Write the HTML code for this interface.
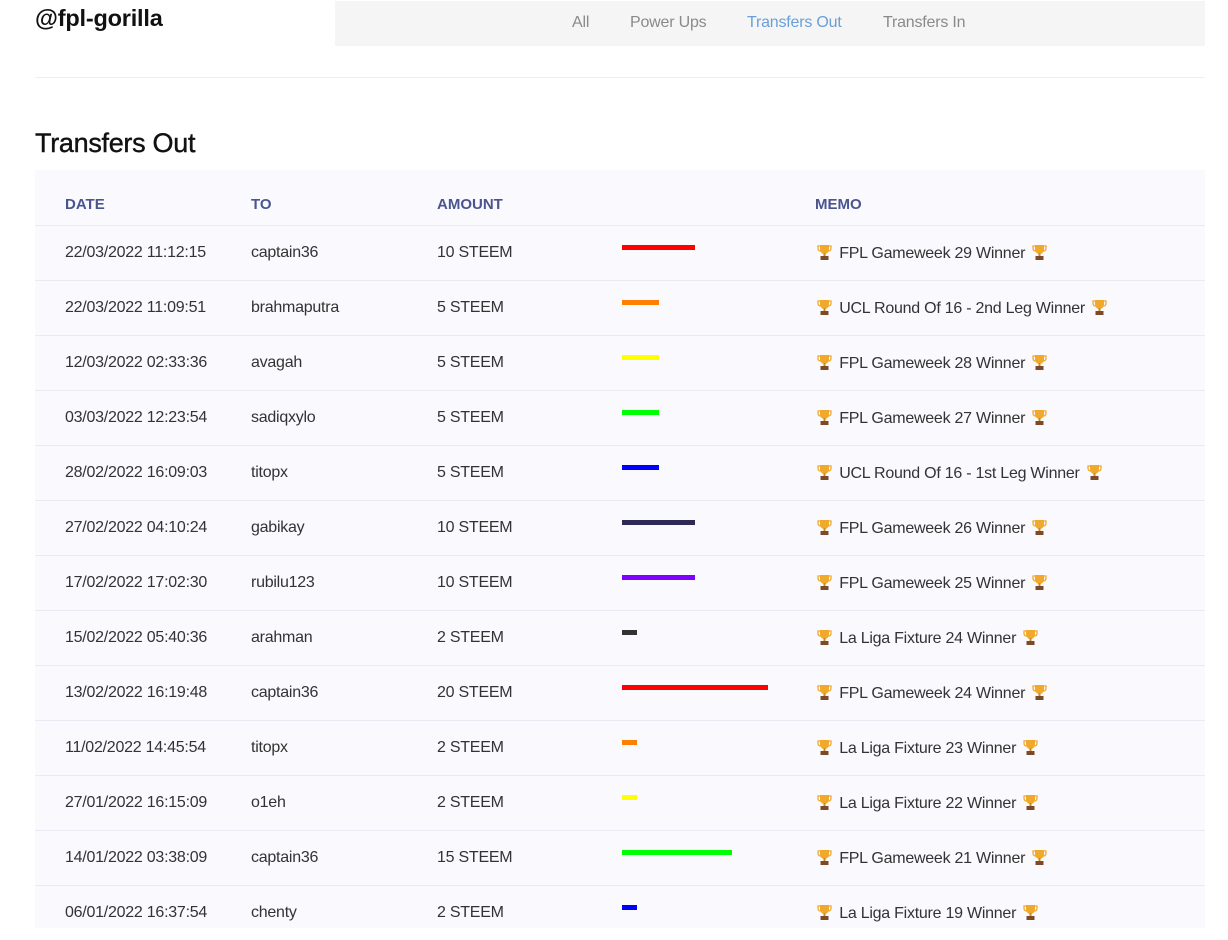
<!DOCTYPE html>
<html><head><meta charset="utf-8"><style>
*{margin:0;padding:0;box-sizing:border-box}
body{width:1228px;height:928px;overflow:hidden;background:#fff;font-family:"Liberation Sans",sans-serif;color:#333;position:relative}
.brand{position:absolute;left:35px;top:5px;font-size:23.5px;font-weight:bold;color:#111;letter-spacing:-0.2px}
.nav{position:absolute;left:335px;top:1px;width:870px;height:45px;background:#f5f5f5}
.nav span{position:absolute;top:13px;font-size:16px;color:#8a8a8a;letter-spacing:-0.2px}
.sep{position:absolute;left:35px;top:77px;width:1170px;height:1px;background:#eee}
h1{position:absolute;left:35px;top:128px;font-size:27px;font-weight:normal;color:#111;letter-spacing:-0.3px;-webkit-text-stroke:0.4px #111}
.tbl{position:absolute;left:35px;top:170px;width:1170px;height:758px;background:#f9f9fe}
.row{position:absolute;left:0;width:1170px;height:55px;border-top:1px solid #e8ebf3}
.row div{position:absolute;top:18px;font-size:16px;color:#333;white-space:nowrap;letter-spacing:-0.25px}
.hd div{position:absolute;top:26px;font-size:15px;font-weight:bold;color:#4a5590}
.bar{position:absolute;left:587px;top:19px;height:5px}
svg{vertical-align:-2px;margin:0 3px}
</style></head><body>
<div class="brand">@fpl-gorilla</div>
<div class="nav"><span style="left:237px">All</span><span style="left:295px">Power Ups</span><span style="left:412px;color:#6a9fd8">Transfers Out</span><span style="left:548px">Transfers In</span></div>
<div class="sep"></div>
<h1>Transfers Out</h1>
<div class="tbl">
<div class="hd"><div style="left:30px">DATE</div><div style="left:216px">TO</div><div style="left:402px">AMOUNT</div><div style="left:780px">MEMO</div></div>
<div id="rows"></div>
</div>
<script>
var t='<svg width="15" height="16" viewBox="0 0 15 16"><path d="M3 1h9v4c0 3-2 5-4.5 5S3 8 3 5z" fill="#f0a92a"/><path d="M3 2H1v2c0 2 1 3 2.5 3M12 2h2v2c0 2-1 3-2.5 3" stroke="#f0a92a" stroke-width="1.3" fill="none"/><rect x="6.5" y="9" width="2" height="3" fill="#d08a1a"/><rect x="3.5" y="12" width="8" height="4" fill="#7a4a2a"/></svg>';
var d=[["22/03/2022 11:12:15","captain36",10,"red","FPL Gameweek 29 Winner"],["22/03/2022 11:09:51","brahmaputra",5,"#ff8000","UCL Round Of 16 - 2nd Leg Winner"],["12/03/2022 02:33:36","avagah",5,"#ffff00","FPL Gameweek 28 Winner"],["03/03/2022 12:23:54","sadiqxylo",5,"#00ff00","FPL Gameweek 27 Winner"],["28/02/2022 16:09:03","titopx",5,"#0000ff","UCL Round Of 16 - 1st Leg Winner"],["27/02/2022 04:10:24","gabikay",10,"#2e2a55","FPL Gameweek 26 Winner"],["17/02/2022 17:02:30","rubilu123",10,"#8000ff","FPL Gameweek 25 Winner"],["15/02/2022 05:40:36","arahman",2,"#333","La Liga Fixture 24 Winner"],["13/02/2022 16:19:48","captain36",20,"red","FPL Gameweek 24 Winner"],["11/02/2022 14:45:54","titopx",2,"#ff8000","La Liga Fixture 23 Winner"],["27/01/2022 16:15:09","o1eh",2,"#ffff00","La Liga Fixture 22 Winner"],["14/01/2022 03:38:09","captain36",15,"#00ff00","FPL Gameweek 21 Winner"],["06/01/2022 16:37:54","chenty",2,"#0000ff","La Liga Fixture 19 Winner"]];
var h='';d.forEach(function(r,i){h+='<div class="row" style="top:'+(55+i*55)+'px"><div style="left:30px">'+r[0]+'</div><div style="left:216px">'+r[1]+'</div><div style="left:402px">'+r[2]+' STEEM</div><span class="bar" style="width:'+(r[2]*7.3)+'px;background:'+r[3]+'"></span><div style="left:779px">'+t+' '+r[4]+' '+t+'</div></div>'});
document.getElementById('rows').innerHTML=h;
</script>
</body></html>
